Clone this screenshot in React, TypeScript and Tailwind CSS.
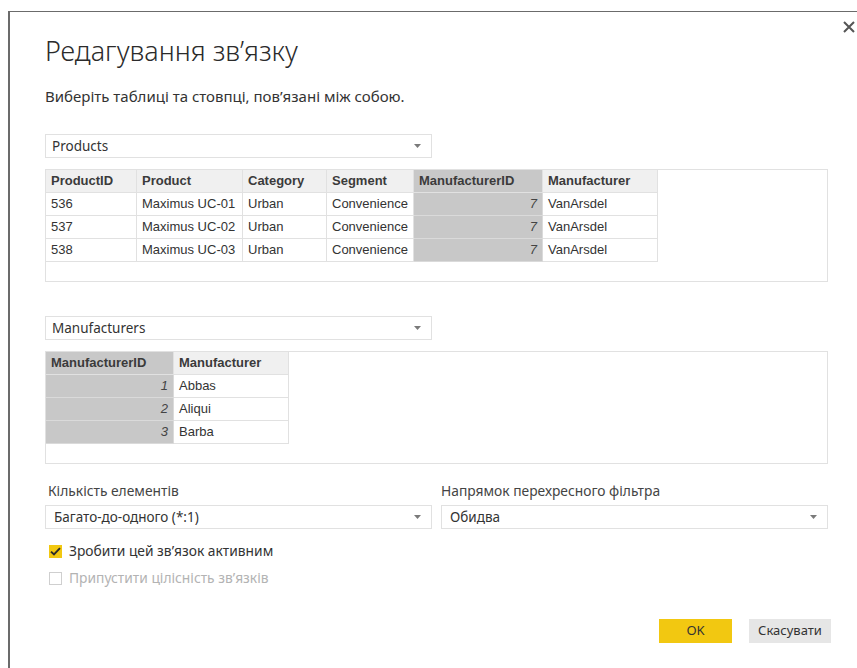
import React from "react";

type Col = { key: string; label: string; w: number; key_?: boolean };

const PRODUCT_COLS: Col[] = [
  { key: "id", label: "ProductID", w: 91 },
  { key: "product", label: "Product", w: 106 },
  { key: "category", label: "Category", w: 84 },
  { key: "segment", label: "Segment", w: 87 },
  { key: "mid", label: "ManufacturerID", w: 129, key_: true },
  { key: "manufacturer", label: "Manufacturer", w: 115 },
];

const PRODUCT_ROWS: Record<string, string>[] = [
  { id: "536", product: "Maximus UC-01", category: "Urban", segment: "Convenience", mid: "7", manufacturer: "VanArsdel" },
  { id: "537", product: "Maximus UC-02", category: "Urban", segment: "Convenience", mid: "7", manufacturer: "VanArsdel" },
  { id: "538", product: "Maximus UC-03", category: "Urban", segment: "Convenience", mid: "7", manufacturer: "VanArsdel" },
];

const MAKER_COLS: Col[] = [
  { key: "mid", label: "ManufacturerID", w: 128, key_: true },
  { key: "manufacturer", label: "Manufacturer", w: 115 },
];

const MAKER_ROWS: Record<string, string>[] = [
  { mid: "1", manufacturer: "Abbas" },
  { mid: "2", manufacturer: "Aliqui" },
  { mid: "3", manufacturer: "Barba" },
];

const Caret = () => (
  <svg width="7" height="4" viewBox="0 0 7 4" className="shrink-0">
    <path d="M0 0 L7 0 L3.5 4 Z" fill="#7a7a7a" />
  </svg>
);

const Select = ({ value, className = "" }: { value: string; className?: string }) => (
  <div
    className={`h-[24px] flex items-center justify-between border border-[#e1e1e1] bg-white pl-[6px] pr-[10px] text-[13.5px] text-[#333] ${className}`}
  >
    <span className="whitespace-nowrap">{value}</span>
    <Caret />
  </div>
);

const Preview = ({ cols, rows }: { cols: Col[]; rows: Record<string, string>[] }) => (
  <div className="h-[113px] w-[783px] border border-[#e1e1e1] bg-white font-['Liberation_Sans',sans-serif] text-[13px]">
    <div className="flex">
      {cols.map((c) => (
        <div
          key={c.key}
          style={{ width: c.w }}
          className={`h-[23px] flex items-center px-[5px] whitespace-nowrap overflow-hidden font-bold text-[#3b3b3b] border-r border-b border-[#e1e1e1] ${
            c.key_ ? "bg-[#c8c8c8]" : "bg-[#f0f0f0]"
          }`}
        >
          {c.label}
        </div>
      ))}
    </div>
    {rows.map((r, i) => (
      <div key={i} className="flex">
        {cols.map((c) => (
          <div
            key={c.key}
            style={{ width: c.w }}
            className={`h-[23px] flex items-center px-[5px] whitespace-nowrap overflow-hidden border-r border-b ${
              c.key_
                ? "bg-[#c8c8c8] border-[#dadada] justify-end italic text-[#444]"
                : "bg-white border-[#e1e1e1] text-[#333]"
            }`}
          >
            {r[c.key]}
          </div>
        ))}
      </div>
    ))}
  </div>
);

const CheckRow = ({ checked, disabled, label }: { checked?: boolean; disabled?: boolean; label: string }) => (
  <div className="flex items-center gap-[7px] pl-[4px] h-[18px]">
    {checked ? (
      <span className="w-[13px] h-[13px] bg-[#f2c811] flex items-center justify-center">
        <svg width="11" height="9" viewBox="0 0 11 9">
          <path d="M1 4.6 L4 7.5 L10 1.2" stroke="#2b2b2b" strokeWidth="1.9" fill="none" />
        </svg>
      </span>
    ) : (
      <span className="w-[13px] h-[13px] border border-[#cfcfcf] bg-white" />
    )}
    <span className={`text-[13.8px] ${disabled ? "text-[#b3b3b3]" : "text-[#333]"}`}>{label}</span>
  </div>
);

export default function App() {
  return (
    <div className="w-[857px] h-[668px] bg-white pt-[11px] pl-[8px] overflow-hidden font-['Noto_Sans',sans-serif]">
      <div className="relative h-full border-l-2 border-t border-[#6b6b6b] pl-[35px]">
        {/* close */}
        <button className="absolute right-[1px] top-[8px] w-[14px] h-[14px] flex items-center justify-center">
          <svg width="12" height="12" viewBox="0 0 12 12">
            <path d="M1 1 L11 11 M11 1 L1 11" stroke="#555" strokeWidth="2" />
          </svg>
        </button>

        <h1 className="mt-[23px] text-[27px] leading-[32px] font-light text-[#2b2b2b]">
          Редагування зв’язку
        </h1>
        <p className="mt-[19px] text-[15px] leading-[20px] text-[#333]">
          Виберіть таблиці та стовпці, пов’язані між собою.
        </p>

        <Select value="Products" className="mt-[28px] w-[387px]" />
        <div className="mt-[11px]">
          <Preview cols={PRODUCT_COLS} rows={PRODUCT_ROWS} />
        </div>

        <Select value="Manufacturers" className="mt-[34px] w-[387px]" />
        <div className="mt-[11px]">
          <Preview cols={MAKER_COLS} rows={MAKER_ROWS} />
        </div>

        <div className="mt-[19px] flex gap-[9px] w-[783px]">
          <div className="flex-1 flex flex-col">
            <label className="pl-[3px] text-[13.8px] leading-[16px] text-[#444]">Кількість елементів</label>
            <Select value="Багато-до-одного (*:1)" className="mt-[6px] pl-[8px]" />
          </div>
          <div className="flex-1 flex flex-col">
            <label className="text-[13.8px] leading-[16px] text-[#444]">Напрямок перехресного фільтра</label>
            <Select value="Обидва" className="mt-[6px] pl-[8px]" />
          </div>
        </div>

        <div className="mt-[13px] flex flex-col gap-[9px]">
          <CheckRow checked label="Зробити цей зв’язок активним" />
          <CheckRow disabled label="Припустити цілісність зв’язків" />
        </div>

        <div className="mt-[32px] flex justify-end gap-[17px] pr-[26px]">
          <button className="w-[73px] h-[24px] bg-[#f2c811] text-[13px] text-[#333]">OK</button>
          <button className="w-[82px] h-[24px] bg-[#e6e6e6] text-[13px] text-[#333]">Скасувати</button>
        </div>
      </div>
    </div>
  );
}
